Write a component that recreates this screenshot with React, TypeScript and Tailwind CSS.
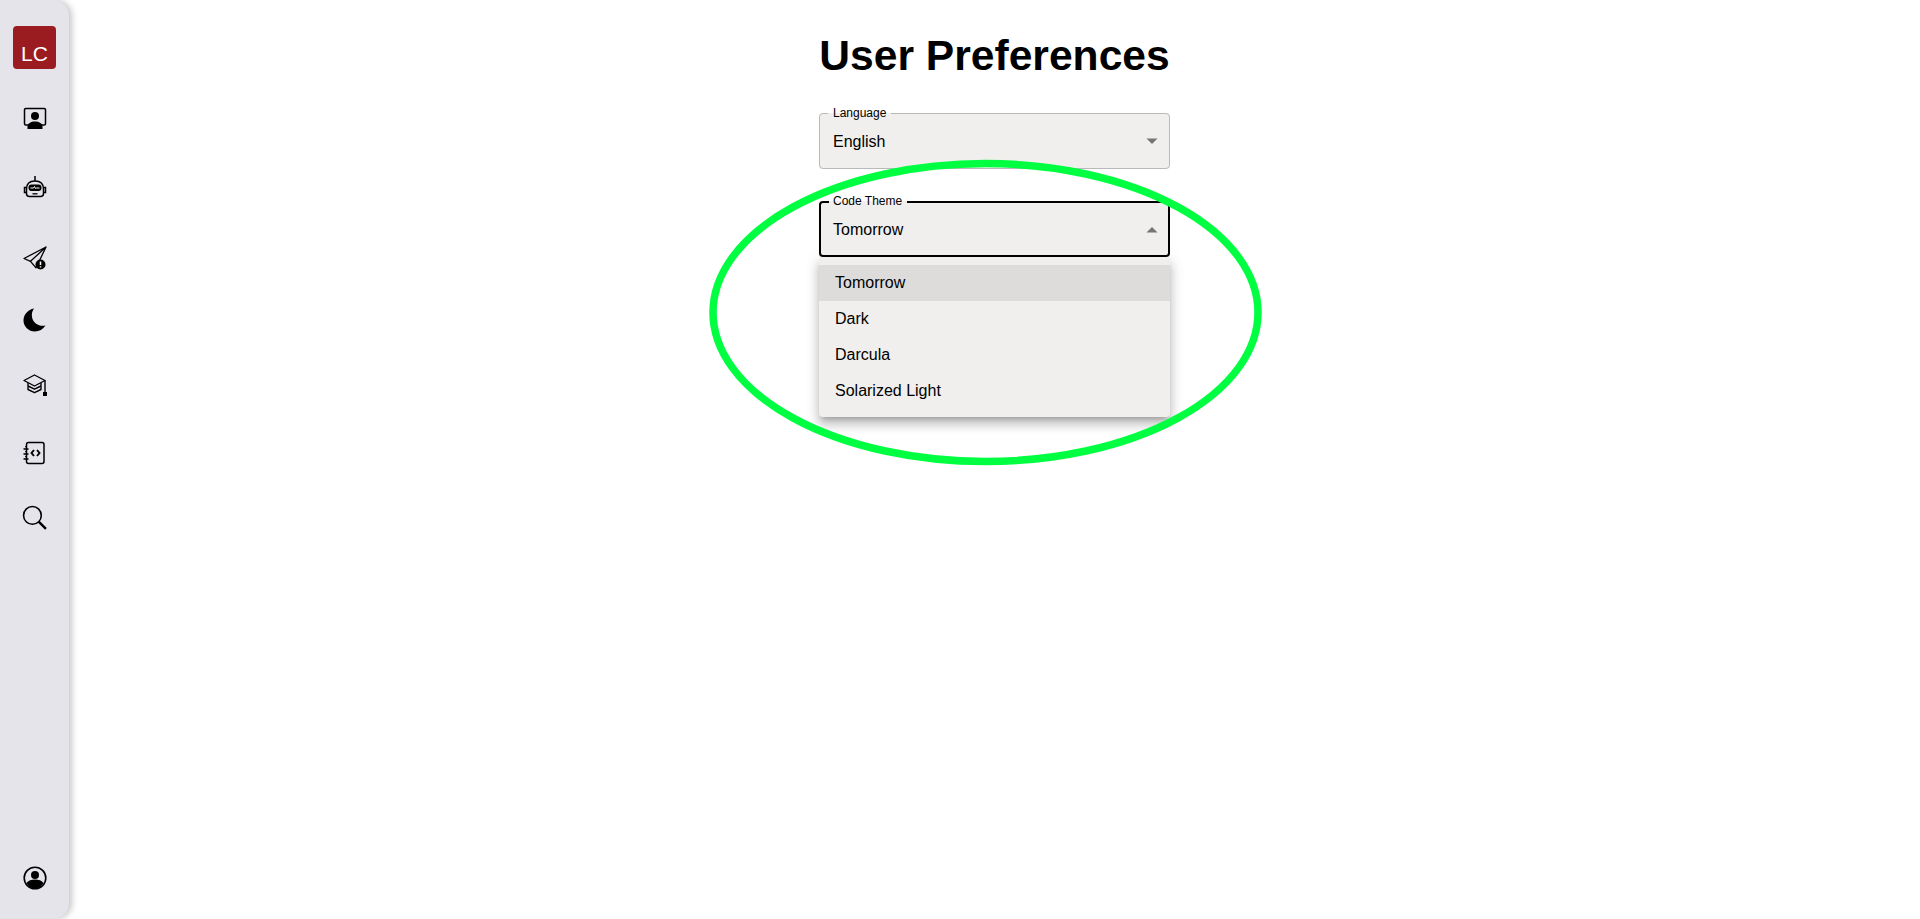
const MENU_ITEMS = ["Tomorrow", "Dark", "Darcula", "Solarized Light"];

function PresentIcon() {
  return (
    <svg width="24" height="24" viewBox="0 0 24 24" fill="none">
      <path d="M6 19H2.800A1.300 1.300 0 0 1 1.500 17.700V3.800A1.300 1.300 0 0 1 2.800 2.500h18.400a1.300 1.300 0 0 1 1.300 1.300v13.900a1.300 1.300 0 0 1-1.300 1.300H18" stroke="#000" strokeWidth="1.500" />
      <circle cx="12" cy="10" r="4" fill="#000" />
      <path d="M4.500 23v-2.500c0-3 3.500-5 7.500-5s7.500 2 7.500 5V23z" fill="#000" />
    </svg>
  );
}

function RobotIcon() {
  return (
    <svg width="24" height="24" viewBox="0 0 24 24" fill="none" stroke="#000" strokeWidth="1.500">
      <path d="M12 1v5" />
      <path d="M3.500 14c0-5 3-8 8.500-8s8.500 3 8.500 8v4.500c0 2-1.200 3-3 3h-11c-1.800 0-3-1-3-3z" />
      <path d="M3.500 12.500H1.500v5h2M20.500 12.500h2v5h-2" />
      <rect x="5.500" y="9.500" width="13" height="6.500" rx="3" fill="#000" stroke="none" />
      <path d="M7.500 13h3l1-1.500 1 2 1-.5h3" stroke="#fff" strokeWidth="1" />
      <path d="M9.500 18.800h5" strokeWidth="1.300" />
    </svg>
  );
}

function SendAlertIcon() {
  return (
    <svg width="24" height="24" viewBox="0 0 24 24" fill="none">
      <path d="M23 1 1 12.500l6.500 2.800 5.500 6.500zM23 1 7.500 15.300" stroke="#000" strokeWidth="1.300" strokeLinejoin="round" />
      <circle cx="17.500" cy="18.500" r="5" fill="#000" />
      <path d="M17.500 15.500v3.500M17.500 20.200v1.300" stroke="#fff" strokeWidth="1.500" />
    </svg>
  );
}

function MoonIcon() {
  return (
    <svg width="24" height="24" viewBox="0 0 24 24">
      <path d="M11 0.500C5 1.500 0.500 6.500 0.500 12.500 0.500 18.500 5.500 23.500 12 23.500c4.300 0 8-2.300 10.500-6-6 1.500-11.800-2-13.300-7.500-.8-3.400-.3-6.700 1.800-9.500z" fill="#000" />
    </svg>
  );
}

function GradIcon() {
  return (
    <svg width="24" height="24" viewBox="0 0 24 24" fill="none" stroke="#000" strokeWidth="1.400" strokeLinejoin="round">
      <path d="M11.500 2 1 7.500 11.500 13 22 7.500z" />
      <path d="M5 10v3l6.500 3.200L18 13v-3" />
      <path d="M5 13.500v3l6.500 3.200 6.500-3.200v-3" />
      <path d="M22 7.500V19" />
      <rect x="20" y="19" width="4" height="4" fill="#000" stroke="none" />
    </svg>
  );
}

function NotebookIcon() {
  return (
    <svg width="24" height="24" viewBox="0 0 24 24" fill="none" stroke="#000" strokeWidth="1.500">
      <rect x="3.500" y="1.500" width="17.500" height="21" rx="2" />
      <path d="M0.500 8h5M0.500 13h5M0.500 18h5" />
      <path d="M3 5v1.200M3 10v1.200M3 15v1.200" />
      <path d="M11 9 8.500 12l2.500 3M14 9l2.500 3-2.500 3" strokeWidth="1.900" />
    </svg>
  );
}

function SearchIcon() {
  return (
    <svg width="25" height="25" viewBox="0 0 24 24" fill="none" stroke="#000">
      <circle cx="10" cy="10" r="8.500" strokeWidth="1.500" />
      <path d="M16 16l7 7" strokeWidth="2.400" />
    </svg>
  );
}

function ProfileIcon() {
  return (
    <svg width="24" height="24" viewBox="0 0 24 24" fill="none">
      <circle cx="12" cy="12" r="10.800" stroke="#000" strokeWidth="1.600" />
      <circle cx="12" cy="9" r="4" fill="#000" />
      <path d="M3.500 17c1.700-2.500 4.800-3.500 8.500-3.500s6.800 1 8.500 3.500A10.500 10.500 0 0 1 12 22.500 10.500 10.500 0 0 1 3.500 17z" fill="#000" />
    </svg>
  );
}

function SelectField({ label, value, open }: { label: string; value: string; open?: boolean }) {
  return (
    <div className="relative h-14 w-full rounded bg-[#f0efed]">
      <fieldset
        className={
          open
            ? "absolute inset-x-0 -top-[5px] bottom-0 rounded border-2 border-black px-2"
            : "absolute inset-x-0 -top-[5px] bottom-0 rounded border border-[#b9b9b9] px-2"
        }
      >
        <legend className={open ? "h-[11px] pl-1 pr-[5px] text-xs leading-[11px] text-black" : "h-[11px] px-[5px] text-xs leading-[11px] text-black"}>
          {label}
        </legend>
      </fieldset>
      <div className="flex h-full items-center justify-between pl-3.5 pr-[11px]">
        <span className="pt-px text-base text-black">{value}</span>
        <svg width="14" height="7" viewBox="0 0 14 7" className={open ? "rotate-180" : ""}>
          <path d="M1.500 0.500h11L7 6z" fill="#757575" />
        </svg>
      </div>
    </div>
  );
}

export default function App() {
  return (
    <div className="relative flex h-[919px] overflow-hidden bg-white font-['Liberation_Sans',Arial,sans-serif]">
      <aside className="flex h-full w-[69px] shrink-0 flex-col items-center rounded-r-2xl bg-[#e4e4ea] pb-[29px] pt-[26px] shadow-[3px_0_6px_rgba(0,0,0,0.22)]">
        <div className="flex h-[43px] w-[43px] items-end justify-center rounded bg-[#9b1c20] pb-[5px] text-[21px] leading-none text-white">
          LC
        </div>
        <div className="mt-[37px] flex flex-col items-center">
          <PresentIcon />
          <div className="mt-[45px]"><RobotIcon /></div>
          <div className="mt-[47px]"><SendAlertIcon /></div>
          <div className="mt-[38px]"><MoonIcon /></div>
          <div className="mt-[41px]"><GradIcon /></div>
          <div className="mt-[44px]"><NotebookIcon /></div>
          <div className="mt-[40px]"><SearchIcon /></div>
        </div>
        <div className="mt-auto"><ProfileIcon /></div>
      </aside>

      <main className="flex flex-1 flex-col items-center">
        <div className="flex w-[351px] flex-col">
          <h1 className="mt-[29px] h-[52px] whitespace-nowrap text-center text-[42.600px] font-bold leading-[52px] text-black">User Preferences</h1>
          <div className="mt-8 flex flex-col gap-8">
            <SelectField label="Language" value="English" />
            <SelectField label="Code Theme" value="Tomorrow" open />
          </div>
          <ul className="rounded bg-[#f0efed] py-2 shadow-[0_5px_5px_-3px_rgba(0,0,0,0.2),0_8px_10px_1px_rgba(0,0,0,0.14),0_3px_14px_2px_rgba(0,0,0,0.12)]">
            {MENU_ITEMS.map((item, i) => (
              <li
                key={item}
                className={
                  i === 0
                    ? "flex h-9 items-center bg-[#dddcda] px-4 text-base text-black"
                    : "flex h-9 items-center px-4 text-base text-black"
                }
              >
                {item}
              </li>
            ))}
          </ul>
        </div>
      </main>

      {/* highlight ring drawn over the open menu */}
      <svg className="pointer-events-none absolute left-[705px] top-[156px]" width="560" height="314" viewBox="0 0 560 314" fill="none">
        <ellipse cx="280.500" cy="156.500" rx="272.500" ry="149" stroke="#00ff41" strokeWidth="7.500" />
      </svg>
    </div>
  );
}
